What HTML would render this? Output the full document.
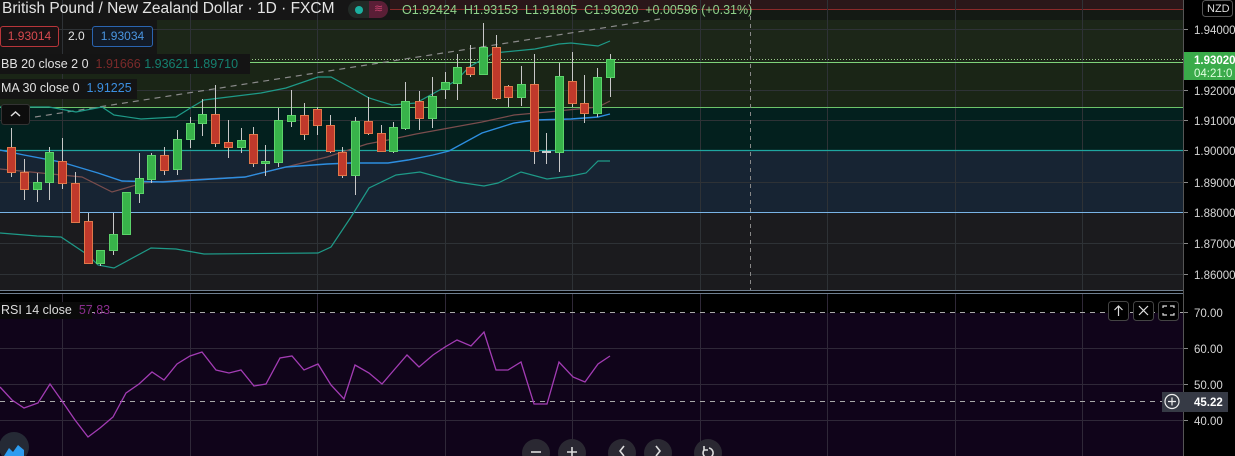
<!DOCTYPE html>
<html><head><meta charset="utf-8"><style>
html,body{margin:0;padding:0;background:#000;}
body{width:1235px;height:456px;overflow:hidden;position:relative;font-family:"Liberation Sans",sans-serif;}
svg{position:absolute;left:0;top:0;}
.t{font-family:"Liberation Sans",sans-serif;}
</style></head><body>
<svg width="1235" height="456" viewBox="0 0 1235 456" xmlns="http://www.w3.org/2000/svg">
<rect x="0" y="0" width="1184" height="291" fill="#151515"/>
<rect x="390" y="0" width="794" height="9" fill="#2a1719"/>
<rect x="0" y="9" width="1184" height="11" fill="#141a14"/>
<rect x="0" y="0" width="390" height="20" fill="#161616"/>
<rect x="157" y="20" width="1027" height="42" fill="#1c2618"/>
<rect x="0" y="62" width="1184" height="45" fill="#1a2516"/>
<rect x="0" y="107" width="1184" height="43" fill="#03201e"/>
<rect x="0" y="150" width="1184" height="62" fill="#172433"/>
<rect x="0" y="212" width="1184" height="79" fill="#1b1b1e"/>
<line x1="390" y1="9.5" x2="1184" y2="9.5" stroke="#8a2a2a" stroke-width="1"/>
<g stroke="#2e3236" stroke-width="1">
<line x1="0" y1="29.5" x2="1184" y2="29.5"/><line x1="0" y1="90.5" x2="1184" y2="90.5"/><line x1="0" y1="120.5" x2="1184" y2="120.5"/><line x1="0" y1="182.5" x2="1184" y2="182.5"/><line x1="0" y1="243.5" x2="1184" y2="243.5"/><line x1="0" y1="274.5" x2="1184" y2="274.5"/>
<line x1="62.5" y1="0" x2="62.5" y2="291"/><line x1="190.5" y1="0" x2="190.5" y2="291"/><line x1="317.5" y1="0" x2="317.5" y2="291"/><line x1="445.5" y1="0" x2="445.5" y2="291"/><line x1="572.5" y1="0" x2="572.5" y2="291"/><line x1="700.5" y1="0" x2="700.5" y2="291"/><line x1="827.5" y1="0" x2="827.5" y2="291"/><line x1="955.5" y1="0" x2="955.5" y2="291"/><line x1="1082.5" y1="0" x2="1082.5" y2="291"/>
</g>
<line x1="0" y1="62.5" x2="1184" y2="62.5" stroke="#7fd37a" stroke-width="1"/>
<line x1="0" y1="59.5" x2="1184" y2="59.5" stroke="#9acb8a" stroke-width="1" stroke-dasharray="1,2"/>
<line x1="0" y1="107.5" x2="1184" y2="107.5" stroke="#6cc46a" stroke-width="1"/>
<line x1="0" y1="150.5" x2="1184" y2="150.5" stroke="#1fa5a0" stroke-width="1.2"/>
<line x1="0" y1="212.5" x2="1184" y2="212.5" stroke="#79b4e6" stroke-width="1"/>
<line x1="750.5" y1="0" x2="750.5" y2="456" stroke="#888" stroke-width="1" stroke-dasharray="4,4"/>
<line x1="35" y1="117" x2="660" y2="19" stroke="#8a8a8a" stroke-width="1.2" stroke-dasharray="6,5"/>
<polyline fill="none" stroke="#1e9a88" stroke-width="1.2" points="0,107 49,107 76,112 102,107 114,115 141,119 176,117 192,107 204,100 261,93 286,88 318,77 331,77 355,90 369,98 392,105 416,103 445,87 457,80 469,67 494,53 535,49 559,44 571,43 598,46 610,41"/>
<polyline fill="none" stroke="#1e9a88" stroke-width="1.2" points="0,233 37,236 61,237 88,255 98,265 114,268 151,248 176,249 204,254 318,253 331,247 351,217 369,188 396,175 420,172 457,182 484,186 498,183 521,172 547,179 571,176 586,173 598,161 610,161"/>
<polyline fill="none" stroke="#7a4d4d" stroke-width="1.2" points="0,169 41,173 82,177 112,192 143,183 184,180 245,177 286,167 327,157 367,144 388,140 416,134 449,128 482,122 514,115 547,112 598,107 610,101"/>
<polyline fill="none" stroke="#2d8ee0" stroke-width="1.4" points="0,150 24,155 61,162 98,173 122,181 163,182 245,177 286,167 327,164 351,163 388,163 408,160 433,155 449,151 482,133 514,123 535,120 571,119 598,117 610,114"/>
<g stroke="#c8c8c8" stroke-width="1">
<line x1="11.5" y1="128" x2="11.5" y2="177"/><line x1="24.5" y1="159" x2="24.5" y2="200"/><line x1="37.5" y1="173" x2="37.5" y2="202"/><line x1="49.5" y1="147" x2="49.5" y2="200"/><line x1="62.5" y1="138" x2="62.5" y2="189"/><line x1="75.5" y1="172" x2="75.5" y2="222"/><line x1="88.5" y1="213" x2="88.5" y2="263"/><line x1="100.5" y1="250" x2="100.5" y2="266"/><line x1="113.5" y1="213" x2="113.5" y2="255"/><line x1="126.5" y1="192" x2="126.5" y2="235"/><line x1="139.5" y1="153" x2="139.5" y2="203"/><line x1="151.5" y1="153" x2="151.5" y2="183"/><line x1="164.5" y1="147" x2="164.5" y2="175"/><line x1="177.5" y1="130" x2="177.5" y2="175"/><line x1="190.5" y1="117" x2="190.5" y2="148"/><line x1="202.5" y1="99" x2="202.5" y2="136"/><line x1="215.5" y1="85" x2="215.5" y2="147"/><line x1="228.5" y1="120" x2="228.5" y2="158"/><line x1="241.5" y1="128" x2="241.5" y2="153"/><line x1="253.5" y1="127" x2="253.5" y2="167"/><line x1="265.5" y1="145" x2="265.5" y2="176"/><line x1="278.5" y1="108" x2="278.5" y2="167"/><line x1="291.5" y1="90" x2="291.5" y2="127"/><line x1="304.5" y1="103" x2="304.5" y2="140"/><line x1="317.5" y1="107" x2="317.5" y2="135"/><line x1="330.5" y1="115" x2="330.5" y2="153"/><line x1="342.5" y1="147" x2="342.5" y2="178"/><line x1="355.5" y1="117" x2="355.5" y2="195"/><line x1="368.5" y1="97" x2="368.5" y2="135"/><line x1="381.5" y1="125" x2="381.5" y2="151"/><line x1="393.5" y1="122" x2="393.5" y2="153"/><line x1="405.5" y1="82" x2="405.5" y2="130"/><line x1="419.5" y1="91" x2="419.5" y2="130"/><line x1="432.5" y1="77" x2="432.5" y2="128"/><line x1="445.5" y1="72" x2="445.5" y2="99"/><line x1="457.5" y1="54" x2="457.5" y2="100"/><line x1="470.5" y1="45" x2="470.5" y2="77"/><line x1="483.5" y1="23" x2="483.5" y2="75"/><line x1="496.5" y1="35" x2="496.5" y2="100"/><line x1="508.5" y1="85" x2="508.5" y2="107"/><line x1="521.5" y1="66" x2="521.5" y2="106"/><line x1="534.5" y1="54" x2="534.5" y2="164"/><line x1="546.5" y1="133" x2="546.5" y2="164"/><line x1="559.5" y1="63" x2="559.5" y2="172"/><line x1="572.5" y1="52" x2="572.5" y2="107"/><line x1="584.5" y1="75" x2="584.5" y2="123"/><line x1="597.5" y1="68" x2="597.5" y2="117"/><line x1="610.5" y1="54" x2="610.5" y2="97"/>
</g>
<g fill="#c0392b" stroke="#e0784a">
<rect x="7.5" y="147.5" width="8" height="25"/><rect x="20.5" y="172.5" width="8" height="17"/><rect x="58.5" y="161.5" width="8" height="22"/><rect x="71.5" y="183.5" width="8" height="39"/><rect x="84.5" y="221.5" width="8" height="42"/><rect x="160.5" y="155.5" width="8" height="15"/><rect x="211.5" y="114.5" width="8" height="29"/><rect x="224.5" y="142.5" width="8" height="5"/><rect x="249.5" y="134.5" width="8" height="29"/><rect x="300.5" y="115.5" width="8" height="19"/><rect x="313.5" y="109.5" width="8" height="16"/><rect x="326.5" y="125.5" width="8" height="26"/><rect x="338.5" y="152.5" width="8" height="23"/><rect x="364.5" y="121.5" width="8" height="12"/><rect x="377.5" y="133.5" width="8" height="18"/><rect x="415.5" y="101.5" width="8" height="17"/><rect x="466.5" y="67.5" width="8" height="7"/><rect x="492.5" y="47.5" width="8" height="51"/><rect x="504.5" y="86.5" width="8" height="11"/><rect x="530.5" y="84.5" width="8" height="67"/><rect x="568.5" y="81.5" width="8" height="22"/><rect x="580.5" y="103.5" width="8" height="10"/>
</g>
<g fill="#38b34a" stroke="#5cd36a">
<rect x="33.5" y="182.5" width="8" height="7"/><rect x="45.5" y="152.5" width="8" height="30"/><rect x="96.5" y="250.5" width="8" height="13"/><rect x="109.5" y="234.5" width="8" height="16"/><rect x="122.5" y="192.5" width="8" height="42"/><rect x="135.5" y="178.5" width="8" height="15"/><rect x="147.5" y="155.5" width="8" height="24"/><rect x="173.5" y="139.5" width="8" height="30"/><rect x="186.5" y="123.5" width="8" height="16"/><rect x="198.5" y="114.5" width="8" height="9"/><rect x="237.5" y="140.5" width="8" height="7"/><rect x="261.5" y="161.5" width="8" height="2"/><rect x="274.5" y="120.5" width="8" height="42"/><rect x="287.5" y="115.5" width="8" height="6"/><rect x="351.5" y="121.5" width="8" height="54"/><rect x="389.5" y="127.5" width="8" height="24"/><rect x="401.5" y="101.5" width="8" height="27"/><rect x="428.5" y="96.5" width="8" height="22"/><rect x="441.5" y="82.5" width="8" height="7"/><rect x="453.5" y="67.5" width="8" height="16"/><rect x="479.5" y="47.5" width="8" height="27"/><rect x="517.5" y="84.5" width="8" height="13"/><rect x="555.5" y="76.5" width="8" height="76"/><rect x="593.5" y="77.5" width="8" height="36"/><rect x="606.5" y="59.5" width="8" height="18"/>
</g>
<rect x="542" y="151" width="9" height="2" fill="#ccc"/>
<rect x="0" y="291" width="1235" height="165" fill="#000"/>
<line x1="0" y1="290.5" x2="1184" y2="290.5" stroke="#6f7f90"/>
<line x1="0" y1="293.5" x2="1184" y2="293.5" stroke="#6f7f90"/>
<rect x="0" y="313" width="1184" height="143" fill="#10041a"/>
<g stroke="#2f2838" stroke-width="1">
<line x1="0" y1="348.5" x2="1184" y2="348.5"/><line x1="0" y1="384.5" x2="1184" y2="384.5"/><line x1="0" y1="420.5" x2="1184" y2="420.5"/>
<line x1="62.5" y1="294" x2="62.5" y2="456"/><line x1="190.5" y1="294" x2="190.5" y2="456"/><line x1="317.5" y1="294" x2="317.5" y2="456"/><line x1="445.5" y1="294" x2="445.5" y2="456"/><line x1="572.5" y1="294" x2="572.5" y2="456"/><line x1="700.5" y1="294" x2="700.5" y2="456"/><line x1="827.5" y1="294" x2="827.5" y2="456"/><line x1="955.5" y1="294" x2="955.5" y2="456"/><line x1="1082.5" y1="294" x2="1082.5" y2="456"/>
</g>
<line x1="0" y1="312.5" x2="1184" y2="312.5" stroke="#aaa" stroke-dasharray="5,5"/>
<line x1="0" y1="401.5" x2="1184" y2="401.5" stroke="#aaa" stroke-dasharray="5,5"/>
<polyline fill="none" stroke="#a33cb4" stroke-width="1.3" points="0,387 12,400 24,408 38,403 50,384 62,401 75,420 88,437 100,428 113,417 126,393 139,384 152,372 164,380 177,364 190,356 202,352 216,370 229,373 241,370 254,386 266,384 280,358 292,356 304,370 318,364 331,385 344,399 355,365 369,373 382,384 394,370 407,355 419,367 433,355 445,347 457,340 471,346 484,332 496,370 508,370 521,362 534,404 547,404 559,362 573,377 585,382 598,364 610,356"/>
<rect x="1184" y="0" width="51" height="456" fill="#000"/>
<line x1="1183.5" y1="0" x2="1183.5" y2="456" stroke="#555"/>
<g stroke="#888"><line x1="1184" y1="29.5" x2="1188" y2="29.5"/><line x1="1184" y1="90.5" x2="1188" y2="90.5"/><line x1="1184" y1="120.5" x2="1188" y2="120.5"/><line x1="1184" y1="150.5" x2="1188" y2="150.5"/><line x1="1184" y1="182.5" x2="1188" y2="182.5"/><line x1="1184" y1="212.5" x2="1188" y2="212.5"/><line x1="1184" y1="243.5" x2="1188" y2="243.5"/><line x1="1184" y1="274.5" x2="1188" y2="274.5"/>
<line x1="1184" y1="312.5" x2="1188" y2="312.5"/><line x1="1184" y1="348.5" x2="1188" y2="348.5"/><line x1="1184" y1="384.5" x2="1188" y2="384.5"/><line x1="1184" y1="420.5" x2="1188" y2="420.5"/></g>
<g class="t" font-size="11.5" fill="#d6d6d6">
<text x="1194" y="34">1.94000</text><text x="1194" y="95">1.92000</text><text x="1194" y="125">1.91000</text><text x="1194" y="155">1.90000</text><text x="1194" y="187">1.89000</text><text x="1194" y="217">1.88000</text><text x="1194" y="248">1.87000</text><text x="1194" y="279">1.86000</text>
<text x="1194" y="317">70.00</text><text x="1194" y="353">60.00</text><text x="1194" y="389">50.00</text><text x="1194" y="425">40.00</text>
</g>
<rect x="1184" y="52" width="51" height="28" fill="#3aab4a"/>
<text x="1194" y="64" class="t" font-size="11.5" fill="#fff" font-weight="bold">1.93020</text>
<text x="1194" y="77" class="t" font-size="11.5" fill="#dfffdf">04:21:0</text>
<rect x="1202.5" y="0.5" width="30" height="16" rx="3" fill="#000" stroke="#555"/>
<text x="1207" y="12" class="t" font-size="11" fill="#ddd">NZD</text>
<rect x="1162" y="392" width="66" height="20" fill="#363a45"/>
<circle cx="1172" cy="401.5" r="7" fill="none" stroke="#eee" stroke-width="1.2"/>
<path d="M1168 401.5h8M1172 397.5v8" stroke="#eee" stroke-width="1.2"/>
<text x="1194" y="406" class="t" font-size="11.5" fill="#fff" font-weight="bold">45.22</text>
<g fill="#000" stroke="#444"><rect x="1108.5" y="301.5" width="20" height="19" rx="3"/><rect x="1133.5" y="301.5" width="20" height="19" rx="3"/><rect x="1158.5" y="301.5" width="20" height="19" rx="3"/></g>
<path d="M1118.5 316v-10M1114.5 310l4-4 4 4" fill="none" stroke="#ddd" stroke-width="1.2"/>
<path d="M1139 306l9 9M1148 306l-9 9" fill="none" stroke="#ddd" stroke-width="1.2"/>
<path d="M1163 308v-2h4M1170 306h4v2M1174 313v2h-4M1167 315h-4v-2" fill="none" stroke="#ddd" stroke-width="1.2"/>
<g fill="#2a2832"><circle cx="536" cy="453" r="14"/><circle cx="572" cy="453" r="14"/><circle cx="622" cy="453" r="14"/><circle cx="658" cy="453" r="14"/><circle cx="708" cy="453" r="14"/></g>
<g fill="none" stroke="#ddd" stroke-width="1.6"><path d="M531 452h10"/><path d="M567 452h10M572 447v10"/><path d="M624 446l-4 5 4 5"/><path d="M656 446l4 5-4 5"/><path d="M704 450a5 5 0 1 0 5-2M704 446v4h4"/></g>
<circle cx="14" cy="447" r="15" fill="#252a35"/>
<path d="M4 456l5-8 4 4 5-7 6 5 v6z" fill="#2d9cf0"/>
</svg>
<div style="position:absolute;left:2px;top:0px;font-size:15.5px;color:#e4e4e4;white-space:nowrap;">British Pound / New Zealand Dollar · 1D · FXCM</div>
<div style="position:absolute;left:348px;top:1px;width:40px;height:17px;border-radius:9px;background:#222a26;"></div>
<div style="position:absolute;left:369px;top:1px;width:19px;height:17px;border-radius:0 9px 9px 0;background:#5a1e36;"></div>
<div style="position:absolute;left:355px;top:6px;width:8px;height:8px;border-radius:50%;background:#1bb0a0;"></div>
<div style="position:absolute;left:374px;top:2px;font-size:11px;color:#c0406a;">≋</div>
<div style="position:absolute;left:402px;top:3px;font-size:12.5px;color:#8fd18a;white-space:nowrap;">O1.92424 &nbsp;H1.93153 &nbsp;L1.91805 &nbsp;C1.93020 &nbsp;+0.00596 (+0.31%)</div>
<div style="position:absolute;left:0;top:26px;width:59px;height:21px;border:1px solid #b8353a;border-radius:3px;box-sizing:border-box;background:#1a1214;color:#d84a4f;font-size:12px;line-height:19px;text-align:center;">1.93014</div>
<div style="position:absolute;left:68px;top:29px;color:#e6e6e6;font-size:12px;">2.0</div>
<div style="position:absolute;left:92px;top:26px;width:61px;height:21px;border:1px solid #2a64b0;border-radius:3px;box-sizing:border-box;background:#121a26;color:#4a95e0;font-size:12px;line-height:19px;text-align:center;">1.93034</div>
<div style="position:absolute;left:0;top:54px;width:250px;height:20px;background:#141414;"></div>
<div style="position:absolute;left:1px;top:57px;font-size:12.5px;color:#e0e0e0;white-space:nowrap;">BB 20 close 2 0 &nbsp;<span style="color:#7a2a2a">1.91666</span> <span style="color:#15806f">1.93621</span> <span style="color:#15806f">1.89710</span></div>
<div style="position:absolute;left:0;top:79px;width:137px;height:20px;background:#141414;"></div>
<div style="position:absolute;left:1px;top:81px;font-size:12.5px;color:#e0e0e0;white-space:nowrap;">MA 30 close 0 &nbsp;<span style="color:#3c8fe0">1.91225</span></div>
<div style="position:absolute;left:1px;top:104px;width:27px;height:19px;border:1px solid #333;border-radius:3px;background:#0d0d0d;"></div>
<svg width="30" height="20" style="left:1px;top:104px"><path d="M10 12l4.5-4 4.5 4" fill="none" stroke="#ddd" stroke-width="1.5"/></svg>
<div style="position:absolute;left:0;top:302px;width:92px;height:17px;background:#0a0a0a;"></div>
<div style="position:absolute;left:1px;top:303px;font-size:12.5px;color:#dcdcdc;white-space:nowrap;">RSI 14 close &nbsp;<span style="color:#8a2d8e">57.83</span></div>
</body></html>
